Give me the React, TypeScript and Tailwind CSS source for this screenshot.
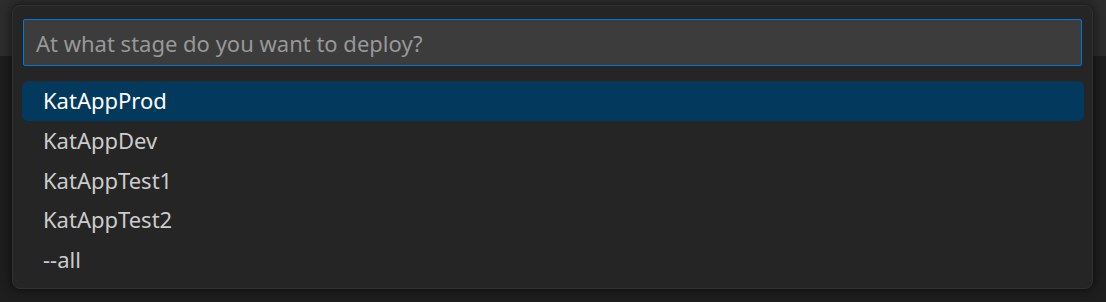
const items = ['KatAppProd', 'KatAppDev', 'KatAppTest1', 'KatAppTest2', '--all'];

export default function App() {
  return (
    <div
      className="relative h-[302px] w-[1106px] overflow-hidden bg-[#1e1e1e]"
      style={{ fontFamily: '"Noto Sans", "Open Sans", sans-serif' }}
    >
      {/* editor tab strip behind the quick pick */}
      <div className="h-[56px] bg-[#2d2d2d]" />

      {/* quick pick widget */}
      <div className="absolute left-[12px] top-[5px] flex h-[284px] w-[1081px] flex-col rounded-[8px] border border-[#303030] bg-[#252525] shadow-[0_0_10px_2px_rgba(0,0,0,0.45)]">
        <div className="ml-[10px] mt-[13px] flex h-[47px] w-[1059px] items-center rounded-[2px] border border-[#0078d4] bg-[#3c3c3c] pl-[12px]">
          <span className="text-[22px] leading-none text-[#989898]">At what stage do you want to deploy?</span>
        </div>

        <div className="ml-[9px] mt-[15px] flex w-[1062px] flex-col">
          {items.map((item, i) => (
            <div
              key={item}
              className={
                i === 0
                  ? 'flex h-[39.7px] items-center rounded-[6px] bg-[#04395e] pl-[21px] text-[22px] text-white'
                  : 'flex h-[39.7px] items-center rounded-[6px] pl-[21px] text-[22px] text-[#cccccc]'
              }
            >
              {item}
            </div>
          ))}
        </div>
      </div>
    </div>
  );
}
